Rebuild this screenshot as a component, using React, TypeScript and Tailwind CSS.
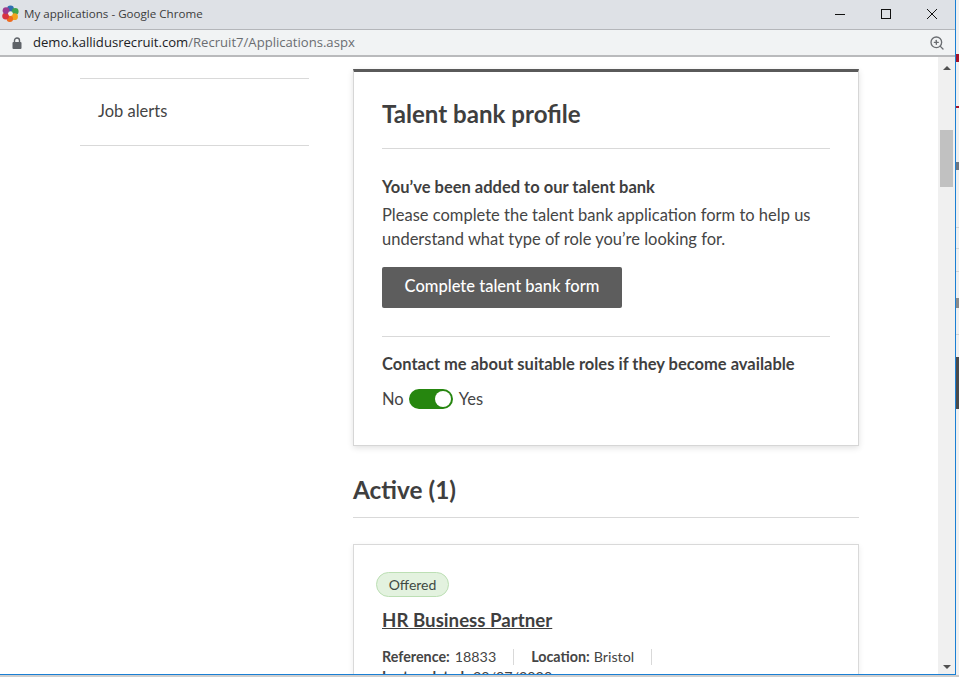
import { ZoomIn } from 'lucide-react';

function ChromeLogo() {
  return (
    <svg width="17" height="17" viewBox="0 0 16 16" className="shrink-0">
      <circle cx="8" cy="3.6" r="3.2" fill="#2f6fb0" />
      <circle cx="12.4" cy="6" r="3.2" fill="#3fa34d" />
      <circle cx="11.8" cy="11" r="3.2" fill="#f2a31b" />
      <circle cx="7.4" cy="13" r="3" fill="#ee6a1f" />
      <circle cx="3.4" cy="10.4" r="3.2" fill="#d8343f" />
      <circle cx="3.8" cy="5.2" r="3.2" fill="#9b3a8f" />
      <circle cx="8" cy="8" r="2.2" fill="#f4f0e4" />
    </svg>
  );
}

function WindowBar() {
  return (
    <div className="h-[30px] shrink-0 bg-[#dee1e6] flex items-center pl-[2px] pb-[2px] border-b border-[#b4b6ba]">
      <ChromeLogo />
      <span className="ml-[5px] text-[11.6px] text-[#3c3c3c] font-['Open_Sans',sans-serif]">My applications - Google Chrome</span>
      <div className="ml-auto flex items-center">
        <svg width="12" height="12" viewBox="0 0 12 12" className="mr-[34px]">
          <path d="M1 6.5H11" stroke="#111" strokeWidth="1" />
        </svg>
        <svg width="12" height="12" viewBox="0 0 12 12" className="mr-[34px]">
          <rect x="1.5" y="1.5" width="9" height="9" fill="none" stroke="#111" strokeWidth="1" />
        </svg>
        <svg width="12" height="12" viewBox="0 0 12 12" className="mr-[17px]">
          <path d="M1 1L11 11M11 1L1 11" stroke="#111" strokeWidth="1" />
        </svg>
      </div>
    </div>
  );
}

function UrlBar() {
  return (
    <div className="h-[27px] shrink-0 bg-[#f1f3f4] flex items-center pl-[12px] pr-[10px] border-b-2 border-[#b9babc]">
      <svg width="10" height="12" viewBox="0 0 10 12" className="shrink-0">
        <path d="M2.5 5V3.5a2.5 2.5 0 0 1 5 0V5" fill="none" stroke="#5f6368" strokeWidth="1.4" />
        <rect x="0.5" y="5" width="9" height="7" rx="1" fill="#5f6368" />
      </svg>
      <span className="ml-[11px] text-[13.1px] text-[#202124] font-['Open_Sans',sans-serif]">
        demo.kallidusrecruit.com<span className="text-[#6a6d71]">/Recruit7/Applications.aspx</span>
      </span>
      <ZoomIn size={16} className="ml-auto text-[#6a6d71]" />
    </div>
  );
}

function Sidebar() {
  return (
    <div className="w-[229px] ml-[80px] mt-[21px] shrink-0">
      <div className="border-y border-[#d9d9d9] h-[68px] flex items-center pl-[18px] pb-[2px] text-[16.5px] text-[#454545]">
        Job alerts
      </div>
    </div>
  );
}

function TalentCard() {
  return (
    <div className="bg-white border-x border-b border-[#d6d6d6] border-t-[3px] border-t-[#5a5a5a] shadow-[0_2px_6px_rgba(0,0,0,0.12)] px-[28px] h-[377px]">
      <h2 className="text-[24.1px] font-bold leading-[30px] pt-[27px] pb-[18px] border-b border-[#d9d9d9] h-[77px] text-[#3f3f3f]">Talent bank profile</h2>
      <p className="mt-[26px] text-[16.5px] leading-[24px] font-bold text-[#3f3f3f]">You’ve been added to our talent bank</p>
      <p className="mt-[4px] text-[16.5px] leading-[24px] text-[#454545]">
        Please complete the talent bank application form to help us understand what type of role you’re looking for.
      </p>
      <div className="mt-[16px] w-[240px] h-[41px] bg-[#5d5d5d] rounded-[2px] flex items-center justify-center pb-[2px] text-[16.5px] font-medium text-white">
        Complete talent bank form
      </div>
      <div className="mt-[28px] border-t border-[#d9d9d9] pt-[15px] text-[16.5px] leading-[24px] font-bold text-[#3f3f3f]">
        Contact me about suitable roles if they become available
      </div>
      <div className="mt-[11px] flex items-center text-[16.5px] leading-[24px] text-[#454545]">
        <span>No</span>
        <div className="ml-[5px] w-[44px] h-[20px] rounded-full bg-[#26860f] flex items-center justify-end pr-[2px]">
          <div className="w-[16px] h-[16px] rounded-full bg-white" />
        </div>
        <span className="ml-[6px]">Yes</span>
      </div>
    </div>
  );
}

function ApplicationCard() {
  return (
    <div className="mt-[26px] bg-white border border-[#d9d9d9] shadow-[0_2px_6px_rgba(0,0,0,0.08)] h-[200px] pl-[22px] pt-[27px]">
      <span className="inline-flex h-[25px] w-[73px] items-center justify-center rounded-full bg-[#e3f2df] border border-[#bcdfb4] text-[14px] text-[#3f4a44]">
        Offered
      </span>
      <h3 className="ml-[6px] mt-[10px] text-[18.7px] leading-[26px] font-bold text-[#3f3f3f] underline">HR Business Partner</h3>
      <div className="ml-[6px] mt-[16px] flex items-center text-[14.3px] leading-[16px] text-[#454545]">
        <span className="font-bold mr-[5px]">Reference:</span>
        <span>18833</span>
        <span className="h-[16px] border-l border-[#d9d9d9] ml-[17px] mr-[17px]" />
        <span className="font-bold mr-[4px]">Location:</span>
        <span>Bristol</span>
        <span className="h-[16px] border-l border-[#d9d9d9] ml-[17px]" />
      </div>
      <div className="ml-[6px] mt-[4px] text-[14.3px] leading-[16px] text-[#454545]">
        <span className="font-bold mr-[5px]">Last updated:</span>
        <span>30/07/2020</span>
      </div>
    </div>
  );
}

function Scrollbar() {
  return (
    <div className="w-[17px] shrink-0 bg-[#f0f0f0] flex flex-col items-center">
      <div className="mt-[9px] w-0 h-0 border-x-[4px] border-x-transparent border-b-[4px] border-b-[#505050]" />
      <div className="mt-[60px] w-[13px] h-[57px] bg-[#c1c1c1]" />
      <div className="mt-auto mb-[5px] w-0 h-0 border-x-[4px] border-x-transparent border-t-[4px] border-t-[#505050]" />
    </div>
  );
}

// the sliver of desktop showing to the right of the browser window
function DesktopEdge() {
  return (
    <div className="w-[3px] shrink-0 bg-[#f0f0f0] flex flex-col">
      <div className="mt-[54px] h-[8px] bg-[#a5152a]" />
      <div className="mt-[44px] h-[2px] bg-[#a5152a]" />
      <div className="mt-[54px] h-[8px] bg-[#6f7680]" />
      <div className="mt-[57px] h-px bg-[#d4d4d4]" />
      <div className="mt-[20px] h-px bg-[#d4d4d4]" />
      <div className="mt-[22px] h-px bg-[#d4d4d4]" />
      <div className="mt-[26px] h-[10px] bg-[#8a8a8a]" />
      <div className="mt-[26px] h-px bg-[#d4d4d4]" />
      <div className="mt-[22px] h-[52px] bg-[#4a4a4a]" />
      <div className="mt-auto h-[2px] bg-[#c9c9c9]" />
    </div>
  );
}

export default function App() {
  return (
    <div className="w-[959px] h-[677px] overflow-hidden flex bg-[#cfcfcf] font-['Lato',sans-serif]">
      <div className="w-[956px] h-[675px] shrink-0 flex flex-col border-r border-b border-[#1a7fd4]">
        <WindowBar />
        <UrlBar />
        <div className="flex-1 min-h-0 flex bg-white overflow-hidden">
          <Sidebar />
          <div className="w-[506px] ml-[44px] shrink-0 pt-[12px]">
            <TalentCard />
            <h2 className="mt-[26px] h-[46px] border-b border-[#d9d9d9] text-[24.4px] leading-[36px] font-bold text-[#3f3f3f]">Active (1)</h2>
            <ApplicationCard />
          </div>
          <div className="flex-1" />
          <Scrollbar />
        </div>
      </div>
      <DesktopEdge />
    </div>
  );
}
